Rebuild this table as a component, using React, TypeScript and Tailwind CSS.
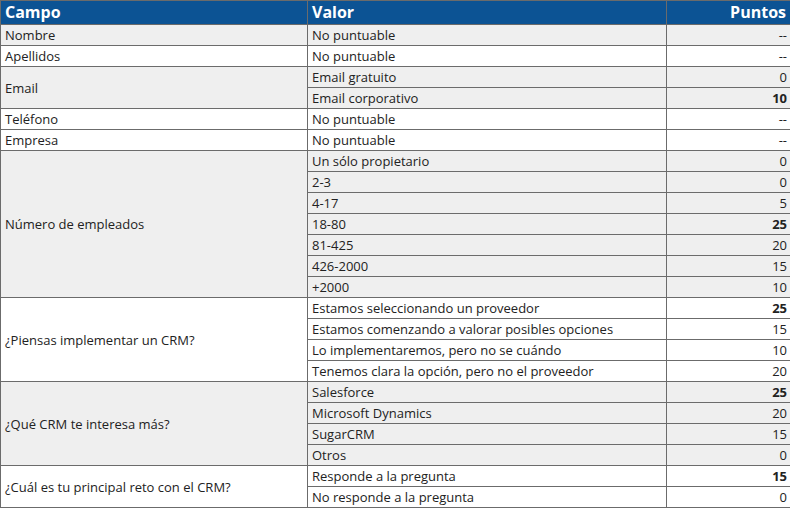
type Opt = [string, string, boolean?];

interface Group {
  campo: string;
  gray: boolean;
  options: Opt[];
}

const groups: Group[] = [
  { campo: 'Nombre', gray: true, options: [['No puntuable', '--']] },
  { campo: 'Apellidos', gray: false, options: [['No puntuable', '--']] },
  { campo: 'Email', gray: true, options: [['Email gratuito', '0'], ['Email corporativo', '10', true]] },
  { campo: 'Teléfono', gray: false, options: [['No puntuable', '--']] },
  { campo: 'Empresa', gray: false, options: [['No puntuable', '--']] },
  {
    campo: 'Número de empleados',
    gray: true,
    options: [
      ['Un sólo propietario', '0'],
      ['2-3', '0'],
      ['4-17', '5'],
      ['18-80', '25', true],
      ['81-425', '20'],
      ['426-2000', '15'],
      ['+2000', '10'],
    ],
  },
  {
    campo: '¿Piensas implementar un CRM?',
    gray: false,
    options: [
      ['Estamos seleccionando un proveedor', '25', true],
      ['Estamos comenzando a valorar posibles opciones', '15'],
      ['Lo implementaremos, pero no se cuándo', '10'],
      ['Tenemos clara la opción, pero no el proveedor', '20'],
    ],
  },
  {
    campo: '¿Qué CRM te interesa más?',
    gray: true,
    options: [
      ['Salesforce', '25', true],
      ['Microsoft Dynamics', '20'],
      ['SugarCRM', '15'],
      ['Otros', '0'],
    ],
  },
  {
    campo: '¿Cuál es tu principal reto con el CRM?',
    gray: false,
    options: [
      ['Responde a la pregunta', '15', true],
      ['No responde a la pregunta', '0'],
    ],
  },
];

export default function App() {
  return (
    <div className="w-[790px] h-[508px] bg-white overflow-hidden" style={{ fontFamily: '"Open Sans", sans-serif' }}>
      <table className="w-[790px] table-fixed border-collapse text-[13px] text-[#222]">
        <colgroup>
          <col className="w-[307px]" />
          <col className="w-[359px]" />
          <col className="w-[124px]" />
        </colgroup>
        <thead>
          <tr className="bg-[#0c5394] text-white text-[16px] font-bold">
            <th className="h-[24px] leading-[23px] border border-[#6b6b6b] px-[4px] text-left">Campo</th>
            <th className="h-[24px] leading-[23px] border border-[#6b6b6b] px-[4px] text-left">Valor</th>
            <th className="h-[24px] leading-[23px] border border-[#6b6b6b] px-[4px] text-right">Puntos</th>
          </tr>
        </thead>
        <tbody>
          {groups.map(g =>
            g.options.map(([valor, puntos, bold], i) => (
              <tr key={g.campo + valor} className={g.gray ? 'bg-[#efefef]' : 'bg-white'}>
                {i === 0 && (
                  <td rowSpan={g.options.length} className="border border-[#6b6b6b] px-[4px] align-middle leading-[20px]">
                    {g.campo}
                  </td>
                )}
                <td className="h-[20px] border border-[#6b6b6b] px-[4px] leading-[20px] py-0">{valor}</td>
                <td className={`h-[20px] border border-[#6b6b6b] pl-[4px] pr-[3px] leading-[20px] py-0 text-right ${bold ? 'font-bold' : ''}`}>
                  {puntos}
                </td>
              </tr>
            ))
          )}
        </tbody>
      </table>
    </div>
  );
}
